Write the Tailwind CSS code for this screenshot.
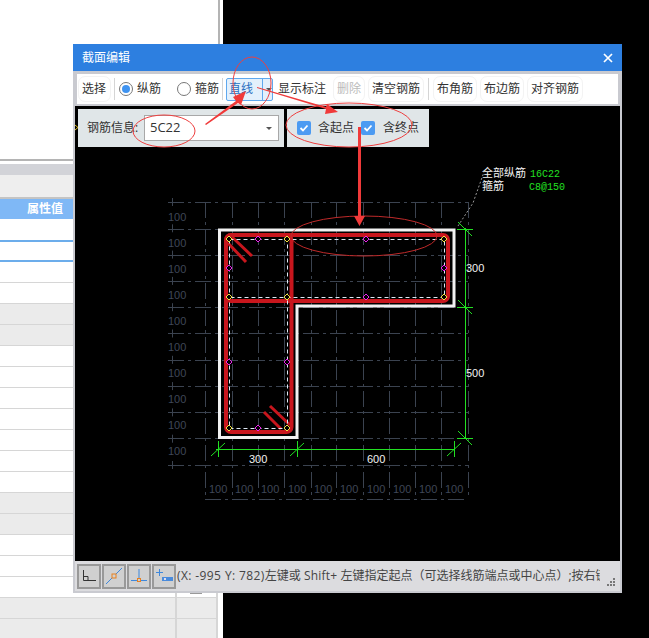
<!DOCTYPE html>
<html lang="zh">
<head>
  <meta charset="UTF-8" />
  <title>截面编辑</title>
  <script src="https://cdn.jsdelivr.net/npm/@tailwindcss/browser@4"></script>
</head>
<body class="bg-black font-['Open_Sans','Noto_Sans_CJK_SC',sans-serif] text-[12px] text-[#333]">
<div class="relative w-[649px] h-[638px] overflow-hidden bg-black">

  <!-- Left property panel behind the dialog -->
  <aside class="w-[223px] h-[638px] bg-white flex flex-col">
    <div class="h-[161px] shrink-0 bg-white border-b-2 border-[#b4b4b4]"></div>
    <div class="h-[3px] shrink-0 bg-white"></div>
    <div class="h-[11px] shrink-0 bg-[#d2d3d8]"></div>
    <div class="h-[24px] shrink-0 bg-[#eeeeee] border-b-2 border-[#c4c4c4]"></div>
    <div class="h-[20px] shrink-0 bg-[#7fb8f6] text-white flex items-center pl-[27px] font-bold">属性值</div>
    <div class="h-[23px] shrink-0 bg-white border-b-2 border-[#6cadeb]"></div>
    <div class="h-[20px] shrink-0 bg-white border-b-2 border-[#6cadeb]"></div>
    <div class="h-[21px] shrink-0 bg-white border-b border-[#d6d6d6]"></div>
    <div class="h-[21px] shrink-0 bg-white border-b border-[#d6d6d6]"></div>
    <div class="h-[21px] shrink-0 bg-[#ebebeb] border-b border-[#d6d6d6]"></div>
    <div class="h-[21px] shrink-0 bg-[#ebebeb] border-b border-[#d6d6d6]"></div>
    <div class="h-[21px] shrink-0 bg-white border-b border-[#d6d6d6]"></div>
    <div class="h-[21px] shrink-0 bg-white border-b border-[#d6d6d6]"></div>
    <div class="h-[21px] shrink-0 bg-white border-b border-[#d6d6d6]"></div>
    <div class="h-[21px] shrink-0 bg-white border-b border-[#d6d6d6]"></div>
    <div class="h-[21px] shrink-0 bg-white border-b border-[#d6d6d6]"></div>
    <div class="h-[21px] shrink-0 bg-white border-b border-[#d6d6d6]"></div>
    <div class="h-[21px] shrink-0 bg-white border-b border-[#d6d6d6]"></div>
    <div class="h-[21px] shrink-0 bg-[#ebebeb] border-b border-[#d6d6d6]"></div>
    <div class="h-[21px] shrink-0 bg-[#ebebeb] border-b border-[#d6d6d6]"></div>
    <div class="h-[21px] shrink-0 bg-white border-b border-[#d6d6d6]"></div>
    <div class="h-[21px] shrink-0 bg-white border-b border-[#d6d6d6]"></div>
    <div class="h-[21px] shrink-0 bg-white border-b border-[#d6d6d6]"></div>
    <div class="h-[21px] shrink-0 bg-[#ebebeb] border-b border-[#d6d6d6]"></div>
    <div class="h-[21px] shrink-0 bg-[#ebebeb]"></div>
  </aside>
  <div class="absolute left-[218px] top-0 w-[2px] h-[50px] bg-[#b4b4b4]"></div>
  <div class="absolute left-[219px] top-[160px] w-[4px] h-[434px] bg-[#c4c7cf]"></div>
  <div class="absolute left-[218px] top-[593px] w-[5px] h-[45px] bg-white"></div>
  <div class="absolute left-[216px] top-[593px] w-[2px] h-[45px] bg-[#d6d6d6]"></div>
  <div class="absolute left-[175px] top-[593px] w-[2px] h-[45px] bg-[#d6d6d6]"></div>
  <div class="absolute left-[190px] top-[592px] w-[12px] h-[2px] bg-[#999]"></div>

  <!-- Dialog window -->
  <section class="absolute left-[73px] top-[44px] w-[549px] h-[549px] bg-[#c9cad0] flex flex-col">
    <header class="h-[27px] shrink-0 bg-[#2d7fe0] text-white flex items-center justify-between pl-[9px] pr-[9px]">
      <span>截面编辑</span>
      <svg width="10" height="10" viewBox="0 0 10 10"><path d="M1 1 9 9M9 1 1 9" stroke="#fff" stroke-width="1.7"/></svg>
    </header>

    <div class="flex-1 ml-[2px] mr-[2px] mt-[1px] mb-[2px] flex flex-col bg-black">
      <!-- Toolbar -->
      <div class="h-[34px] shrink-0 bg-white border-2 border-[#c9cad0] flex items-center">
        <span class="ml-[5px] w-[25px] rounded-[3px] outline outline-[#f3f3f3] outline-offset-[3px]">选择</span>
        <span class="ml-[7px] w-px h-[22px] bg-[#d5d5d5]"></span>
        <span class="ml-[4px] w-[14px] h-[14px] rounded-full border border-[#777] flex items-center justify-center"><span class="w-[8px] h-[8px] rounded-full bg-[#3f93f0]"></span></span>
        <span class="ml-[4px]">纵筋</span>
        <span class="ml-[16px] w-[14px] h-[14px] rounded-full border border-[#777]"></span>
        <span class="ml-[4px]">箍筋</span>
        <span class="ml-[3px] w-px h-[22px] bg-[#d5d5d5]"></span>
        <span class="ml-[3px] w-[47px] h-[23px] rounded-[2px] border border-[#5fa8ee] bg-[#e3f0fc] flex items-center text-[#2a6fc0]">
          <span class="w-[36px] pl-[2px] border-r border-[#5fa8ee] h-full flex items-center">直线</span>
          <span class="ml-[3px] w-0 h-0 border-x-[3px] border-x-transparent border-t-[3px] border-t-[#555]"></span>
        </span>
        <span class="ml-[5px]">显示标注</span>
        <span class="ml-[11px] text-[#bbbbbb] rounded-[3px] outline outline-[#f3f3f3] outline-offset-[3px]">删除</span>
        <span class="ml-[11px] rounded-[3px] outline outline-[#f3f3f3] outline-offset-[3px]">清空钢筋</span>
        <span class="ml-[8px] w-px h-[22px] bg-[#d5d5d5]"></span>
        <span class="ml-[8px] rounded-[3px] outline outline-[#f3f3f3] outline-offset-[3px]">布角筋</span>
        <span class="ml-[11px] rounded-[3px] outline outline-[#f3f3f3] outline-offset-[3px]">布边筋</span>
        <span class="ml-[11px] rounded-[3px] outline outline-[#f3f3f3] outline-offset-[3px]">对齐钢筋</span>
      </div>

      <!-- Canvas -->
      <div class="relative flex-1 bg-black">
        <div class="absolute left-[3px] top-[3px] flex gap-[3px]">
          <div class="w-[206px] h-[38px] bg-[#e0e6e8] flex items-center pl-[9px]">
            <span class="w-[57px]">钢筋信息:</span>
            <div class="w-[135px] h-[26px] bg-white border border-[#a8a8a8] flex items-center justify-between pl-[5px] pr-[6px]">
              <span class="text-[13px]">5C22</span>
              <span class="w-0 h-0 border-x-[3px] border-x-transparent border-t-[3px] border-t-[#555]"></span>
            </div>
          </div>
          <div class="w-[142px] h-[38px] bg-[#e0e6e8] flex items-center pl-[10px]">
            <span class="w-[14px] h-[14px] rounded-[2px] bg-[#4c9bf2] flex items-center justify-center">
              <svg width="10" height="10" viewBox="0 0 10 10"><path d="M1.5 5 4 7.5 8.5 2.5" fill="none" stroke="#fff" stroke-width="1.8"/></svg>
            </span>
            <span class="ml-[7px]">含起点</span>
            <span class="ml-[7px] w-[14px] h-[14px] rounded-[2px] bg-[#4c9bf2] flex items-center justify-center">
              <svg width="10" height="10" viewBox="0 0 10 10"><path d="M1.5 5 4 7.5 8.5 2.5" fill="none" stroke="#fff" stroke-width="1.8"/></svg>
            </span>
            <span class="ml-[8px]">含终点</span>
          </div>
        </div>
      </div>

      <!-- Status bar -->
      <div class="h-[30px] shrink-0 bg-[#dcdcdf] flex items-center pl-[2px] relative">
        <div class="flex gap-px">
          <span class="w-[24px] h-[25px] bg-[#d0d0d0] border-2 border-[#999] flex items-center justify-center">
            <svg width="16" height="14" viewBox="0 0 16 14"><path d="M2.5 1V11.5H15M2.5 7.5H7V11.5" fill="none" stroke="#333"/></svg>
          </span>
          <span class="w-[24px] h-[25px] bg-[#d0d0d0] border-2 border-[#999] flex items-center justify-center">
            <svg width="18" height="18" viewBox="0 0 18 18"><path d="M1 17 17 1" stroke="#3f88dc"/><rect x="7" y="7" width="4" height="4" fill="#d0d0d0" stroke="#e8801f"/></svg>
          </span>
          <span class="w-[24px] h-[25px] bg-[#d0d0d0] border-2 border-[#999] flex items-center justify-center">
            <svg width="18" height="16" viewBox="0 0 18 16"><path d="M9 1V12M1 12.5H17" stroke="#3f88dc"/><rect x="7.5" y="10.5" width="3" height="3" fill="#d0d0d0" stroke="#e8801f"/></svg>
          </span>
          <span class="w-[24px] h-[25px] bg-[#d0d0d0] border-2 border-[#999] flex items-center justify-center">
            <svg width="18" height="16" viewBox="0 0 18 16"><path d="M4.5 1V8M1 4.5H8" stroke="#3f88dc"/><rect x="7" y="9" width="11" height="4" fill="#4a8bdc"/><rect x="9" y="10" width="2" height="2" fill="#dde"/></svg>
          </span>
        </div>
        <span class="ml-px w-[423px] overflow-hidden whitespace-nowrap text-[#444]"><span class="tracking-[0.4px]">(X: -995 Y: 782)</span>左键或 <span class="tracking-[0.2px]">Shift+</span> 左键指定起点（可选择线筋端点或中心点）;按右键结束</span>
        <svg class="absolute right-[4px] bottom-[4px]" width="9" height="9" viewBox="0 0 9 9" fill="#777"><rect x="6" y="0" width="2" height="2"/><rect x="3" y="3" width="2" height="2"/><rect x="6" y="3" width="2" height="2"/><rect x="0" y="6" width="2" height="2"/><rect x="3" y="6" width="2" height="2"/><rect x="6" y="6" width="2" height="2"/></svg>
      </div>
    </div>
  </section>

  <!-- Section drawing: page coordinates, a free canvas -->
  <svg class="absolute left-0 top-0 pointer-events-none" width="649" height="638" viewBox="0 0 649 638">
    <!-- axis grid -->
    <g stroke="#3b4350" stroke-width="1" stroke-dasharray="16 4 3 4" fill="none">
      <path d="M168 202.5H468M168 229.5H468M168 255.5H468M168 281.5H468M168 307.5H468M168 333.5H468M168 360.5H468M168 386.5H468M168 412.5H468M168 438.5H468M168 465.5H468M205 499.5H468"/>
      <path d="M205.5 202V498M232.5 202V498M258.5 202V498M284.5 202V498M311.5 202V498M336.5 202V498M363.5 202V498M389.5 202V498M415.5 202V498M441.5 202V498M468.5 202V498"/>
      <path d="M172.5 198V469" stroke-dasharray="8 18.3"/>
    </g>
    <g fill="#3f4757" font-family="'Liberation Sans',sans-serif" font-size="11">
      <text x="168" y="221">100</text><text x="168" y="247">100</text><text x="168" y="273">100</text><text x="168" y="299">100</text><text x="168" y="325">100</text><text x="168" y="351">100</text><text x="168" y="377">100</text><text x="168" y="403">100</text><text x="168" y="429">100</text><text x="168" y="455">100</text>
      <text x="209" y="493">100</text><text x="235" y="493">100</text><text x="261" y="493">100</text><text x="288" y="493">100</text><text x="314" y="493">100</text><text x="340" y="493">100</text><text x="367" y="493">100</text><text x="393" y="493">100</text><text x="419" y="493">100</text><text x="445" y="493">100</text>
    </g>
    <!-- concrete outline -->
    <path d="M219.5 230H454V306H297V437.5H219.5Z" fill="none" stroke="#f2f2f2" stroke-width="3"/>
    <!-- stirrups -->
    <g fill="none" stroke="#c8161d" stroke-width="4">
      <rect x="226" y="235" width="65.5" height="197" rx="5"/>
      <rect x="226" y="235" width="222" height="66" rx="5"/>
      <path d="M228 243 246 262M232 237 252 256M264 412 281 429M270 406 290 425" stroke-width="3"/>
    </g>
    <g fill="none" stroke="#dfe9f5" stroke-width="1" stroke-dasharray="4 3">
      <path d="M229.5 239.5H444.5V297.5H229.5M229.5 239.5V428.5H287.5V239.5"/>
    </g>
    <!-- bars -->
    <g fill="#000" stroke="#f0e040" stroke-width="1">
      <path d="M229 236 232 239 229 242 226 239Z"/><path d="M287 236 290 239 287 242 284 239Z"/><path d="M444 236 447 239 444 242 441 239Z"/>
      <path d="M229 294 232 297 229 300 226 297Z"/><path d="M287 294 290 297 287 300 284 297Z"/><path d="M444 294 447 297 444 300 441 297Z"/>
      <path d="M229 425 232 428 229 431 226 428Z"/><path d="M287 425 290 428 287 431 284 428Z"/>
    </g>
    <g fill="#000" stroke="#ef22ef" stroke-width="1">
      <path d="M258 236 261 239 258 242 255 239Z"/><path d="M366 236 369 239 366 242 363 239Z"/><path d="M229 265 232 268 229 271 226 268Z"/><path d="M444 265 447 268 444 271 441 268Z"/>
      <path d="M366 294 369 297 366 300 363 297Z"/><path d="M229 359 232 362 229 365 226 362Z"/><path d="M287 359 290 362 287 365 284 362Z"/><path d="M258 425 261 428 258 431 255 428Z"/>
    </g>
    <!-- dimensions -->
    <g stroke="#22e022" stroke-width="1" fill="none">
      <path d="M465.5 228V438.5M457 229.5H473M457 307.5H473M457 438.5H473M458 222 472 236M458 300 472 314M458 431 472 445"/>
      <path d="M216 449.5H454M218.5 441V457M297.5 441V457M454.5 441V457M211 456 225 443M290 456 304 443M447 456 461 443"/>
    </g>
    <path d="M458 226 473 203 484 172" stroke="#999" stroke-dasharray="2 2" fill="none"/>
    <g fill="#f2f2f2" font-family="'Liberation Sans',sans-serif" font-size="11">
      <text x="466" y="272">300</text><text x="466" y="377">500</text><text x="249" y="463">300</text><text x="367" y="463">600</text>
    </g>
    <g font-family="'Noto Sans CJK SC',sans-serif" font-size="11" fill="#f2f2f2">
      <text x="482" y="177">全部纵筋</text><text x="482" y="190">箍筋</text>
    </g>
    <g font-family="'Liberation Mono',monospace" font-size="10" fill="#22e022">
      <text x="530" y="177">16C22</text><text x="529" y="190">C8@150</text>
    </g>

    <!-- red markup over the screenshot -->
    <g fill="none" stroke="#ee4040" stroke-width="1">
      <ellipse cx="252" cy="83" rx="19" ry="26"/>
      <ellipse cx="164" cy="131" rx="31" ry="16"/>
      <ellipse cx="349" cy="125" rx="63" ry="22"/>
      <ellipse cx="364" cy="236" rx="73" ry="20" stroke="#c02a2a"/>
    </g>
    <g fill="#f03a3a" stroke="none">
      <path d="M205 124 236 101 233 97 246 91 241 105 238 103 206 125Z"/>
      <path d="M257 87 326 107 327 104 338 112 325 114 326 109 257 88Z"/>
      <path d="M358 127H361V216H365L359.500 226 354 216H358Z"/>
    </g>
    <path d="M75 125 78 127.500 75 130" fill="none" stroke="#e0c020"/>
  </svg>
</div>
</body>
</html>
